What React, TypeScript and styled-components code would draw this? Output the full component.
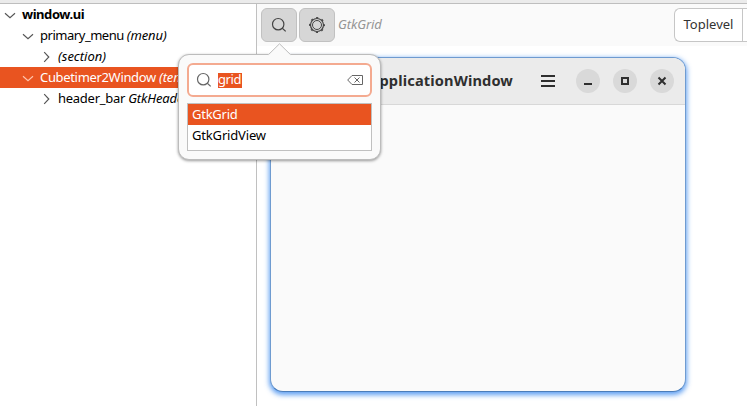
import React from 'react';
import styled, { createGlobalStyle } from 'styled-components';

const Global = createGlobalStyle`
  * { box-sizing: border-box; }
  body { margin: 0; background: #fff; font-family: "Noto Sans", sans-serif; font-size: 13px; color: #000; overflow: hidden; }
`;

const Screen = styled.div`
  position: relative;
  width: 747px;
  height: 406px;
  overflow: hidden;
  display: flex;
  flex-direction: column;
`;

const TopStrip = styled.div`
  flex: none;
  height: 4px;
  background: #ebebeb;
  border-bottom: 1px solid #bebebe;
`;

const Body = styled.div`
  display: flex;
  flex: 1;
  min-height: 0;
`;

const Tree = styled.div`
  width: 257px;
  flex: none;
  border-right: 1px solid #c0c0c0;
  background: #fff;
`;

const TreeRow = styled.div<{ $level: number; $selected?: boolean }>`
  display: flex;
  align-items: center;
  height: 21px;
  padding-left: ${(p) => 4 + p.$level * 18}px;
  background: ${(p) => (p.$selected ? '#e95420' : 'transparent')};
  color: ${(p) => (p.$selected ? '#fff' : '#000')};
  white-space: pre;
  overflow: hidden;
  svg { flex: none; width: 12px; height: 12px; margin-right: 6px; stroke: ${(p) => (p.$selected ? '#ffc5ae' : '#555')}; }
`;

const Text = styled.span<{ $spacing?: number; $bold?: boolean; $italic?: boolean }>`
  white-space: pre;
  line-height: 18px;
  padding-bottom: 2px;
  letter-spacing: ${(p) => p.$spacing ?? 0}px;
  font-weight: ${(p) => (p.$bold ? 700 : 400)};
  font-style: ${(p) => (p.$italic ? 'italic' : 'normal')};
`;

const Main = styled.div`
  flex: 1;
  min-width: 0;
  background: #fff;
`;

const Toolbar = styled.div`
  display: flex;
  align-items: center;
  height: 42px;
  padding: 0 0 0 4px;
  gap: 2px;
  background: #fafafa;
`;

const ToolButton = styled.button`
  display: flex;
  align-items: center;
  justify-content: center;
  width: 36px;
  height: 34px;
  padding: 0;
  border: 1px solid #c1c1c1;
  border-radius: 6px;
  background: #d6d6d6;
`;

const ClassHint = styled.div`
  display: flex;
  margin-left: 1px;
  color: #959595;
`;

const Segmented = styled.div`
  display: flex;
  margin-left: auto;
  width: 73px;
  height: 34px;
  border: 1px solid #c6c6c6;
  border-right: 0;
  border-radius: 6px 0 0 6px;
  background: #fff;
`;

const Segment = styled.div`
  display: flex;
  align-items: center;
  justify-content: center;
  width: 68px;
  border-right: 1px solid #c6c6c6;
  color: #333;
`;

const Preview = styled.div`
  display: flex;
  flex-direction: column;
  width: 416px;
  height: 335px;
  margin: 11px 0 0 13px;
  border: 1px solid #6f9bd0;
  border-bottom-color: #4b7dba;
  border-radius: 13px;
  background: #fafafa;
  overflow: hidden;
  box-shadow: 0 2px 5px 1px rgba(70, 145, 240, 0.85);
`;

const TitleBar = styled.div`
  display: flex;
  align-items: center;
  height: 47px;
  padding-right: 11px;
  background: #ebebeb;
  border-bottom: 1px solid #d8d8d8;
`;

const Title = styled.div`
  display: flex;
  margin-left: auto;
  margin-right: 28px;
  font-size: 14.6px;
  color: #2f2f2f;
`;

const MenuIcon = styled.svg`
  width: 14px;
  height: 12px;
  margin-right: 21px;
`;

const Controls = styled.div`
  display: flex;
  gap: 13px;
`;

const Control = styled.div`
  display: flex;
  align-items: center;
  justify-content: center;
  width: 24px;
  height: 24px;
  border-radius: 50%;
  background: #d9d9d9;
`;

const Popover = styled.div`
  position: absolute;
  left: 178px;
  top: 54px;
  width: 203px;
  height: 106px;
  padding: 8px;
  border: 1px solid #bcbcbc;
  border-radius: 11px;
  background: #fafafa;
  box-shadow: 0 1px 3px rgba(0, 0, 0, 0.4);
`;

const Arrow = styled.svg`
  position: absolute;
  left: 89px;
  top: -12px;
  width: 23px;
  height: 13px;
`;

const SearchEntry = styled.div`
  display: flex;
  align-items: center;
  height: 34px;
  padding: 0 7px;
  border: 2px solid #f4aa90;
  border-radius: 6px;
  background: #fff;
`;

const Selection = styled.div`
  display: flex;
  align-items: center;
  height: 15px;
  margin: 0 auto 0 6px;
  width: 24px;
  background: #e95420;
  color: #fff;
`;

const Results = styled.div`
  height: 48px;
  margin-top: 6px;
  border: 1px solid #c0c0c0;
  background: #fff;
`;

const Result = styled.div<{ $selected?: boolean }>`
  display: flex;
  align-items: center;
  height: 21px;
  padding-left: 4px;
  background: ${(p) => (p.$selected ? '#e95420' : '#fff')};
  color: ${(p) => (p.$selected ? '#fff' : '#000')};
`;

const Chevron = ({ open }: { open?: boolean }) => (
  <svg viewBox="0 0 12 12" fill="none" strokeWidth="1.15">
    <path d={open ? 'M1 4.2 L6 8.7 L11 4.2' : 'M4.2 1.2 L8.8 6 L4.2 10.8'} />
  </svg>
);

const SearchIcon = ({ color }: { color: string }) => (
  <svg width="16" height="16" viewBox="0 0 16 16" fill="none" stroke={color} strokeWidth="1.2">
    <circle cx="7.2" cy="7.2" r="5.7" />
    <path d="M11.3 11.3 L14.7 14.4" />
  </svg>
);

const GearIcon = () => (
  <svg width="16" height="16" viewBox="0 0 16 16" fill="none" stroke="#444">
    <circle cx="8" cy="8" r="6.5" strokeWidth="1.2" />
    <circle cx="8" cy="8" r="4.5" strokeWidth="1" />
    <circle cx="8" cy="8" r="7.4" strokeWidth="1.1" strokeDasharray="2.2 3.612" strokeDashoffset="1.1" />
  </svg>
);

const ClearIcon = () => (
  <svg width="16" height="12" viewBox="0 0 16 12" fill="none" stroke="#666" strokeWidth="1">
    <path d="M5 1.5 H15.5 V10.5 H5 L0.7 6 Z M7.5 3.5 L12.5 8.5 M12.5 3.5 L7.5 8.5" />
  </svg>
);

export default function App() {
  return (
    <Screen>
      <Global />
      <TopStrip />
      <Body>
        <Tree>
          <TreeRow $level={0}><Chevron open /><Text $bold $spacing={-0.45}>window.ui</Text></TreeRow>
          <TreeRow $level={1}><Chevron open /><Text $spacing={-0.47}>primary_menu </Text><Text $italic $spacing={-0.1}>(menu)</Text></TreeRow>
          <TreeRow $level={2}><Chevron /><Text $italic>(section)</Text></TreeRow>
          <TreeRow $level={1} $selected><Chevron open /><Text $spacing={-0.33}>Cubetimer2Window </Text><Text $italic $spacing={-0.1}>(template)</Text></TreeRow>
          <TreeRow $level={2}><Chevron /><Text $spacing={-0.27}>header_bar </Text><Text $italic $spacing={-0.15}>GtkHeaderBar</Text></TreeRow>
        </Tree>
        <Main>
          <Toolbar>
            <ToolButton aria-label="Search"><SearchIcon color="#444" /></ToolButton>
            <ToolButton aria-label="Settings"><GearIcon /></ToolButton>
            <ClassHint><Text $italic $spacing={-0.1}>GtkGrid</Text></ClassHint>
            <Segmented><Segment><Text>Toplevel</Text></Segment></Segmented>
          </Toolbar>
          <Preview>
            <TitleBar>
              <Title><Text $bold $spacing={0.14}>ApplicationWindow</Text></Title>
              <MenuIcon viewBox="0 0 14 12"><path d="M0 1H14M0 6H14M0 11H14" stroke="#2e2e2e" strokeWidth="2" /></MenuIcon>
              <Controls>
                <Control><svg width="16" height="16" viewBox="0 0 16 16"><path d="M4 11H12" stroke="#2e2e2e" strokeWidth="2" /></svg></Control>
                <Control><svg width="16" height="16" viewBox="0 0 16 16"><rect x="5" y="5" width="6" height="6" fill="none" stroke="#2e2e2e" strokeWidth="2" /></svg></Control>
                <Control><svg width="16" height="16" viewBox="0 0 16 16"><path d="M4.5 4.5L11.5 11.5M11.5 4.5L4.5 11.5" stroke="#2e2e2e" strokeWidth="2" /></svg></Control>
              </Controls>
            </TitleBar>
          </Preview>
        </Main>
      </Body>
      <Popover>
        <Arrow viewBox="0 0 23 13">
          <path d="M0 13 L0.5 11.6 L11.5 0.8 L22.5 11.6 L23 13 Z" fill="#fafafa" />
          <path d="M0.5 11.6 L11.5 0.8 L22.5 11.6" fill="none" stroke="#bcbcbc" />
        </Arrow>
        <SearchEntry>
          <SearchIcon color="#666" />
          <Selection><Text $spacing={-0.4}>grid</Text></Selection>
          <ClearIcon />
        </SearchEntry>
        <Results>
          <Result $selected><Text $spacing={-0.25}>GtkGrid</Text></Result>
          <Result><Text $spacing={-0.17}>GtkGridView</Text></Result>
        </Results>
      </Popover>
    </Screen>
  );
}
